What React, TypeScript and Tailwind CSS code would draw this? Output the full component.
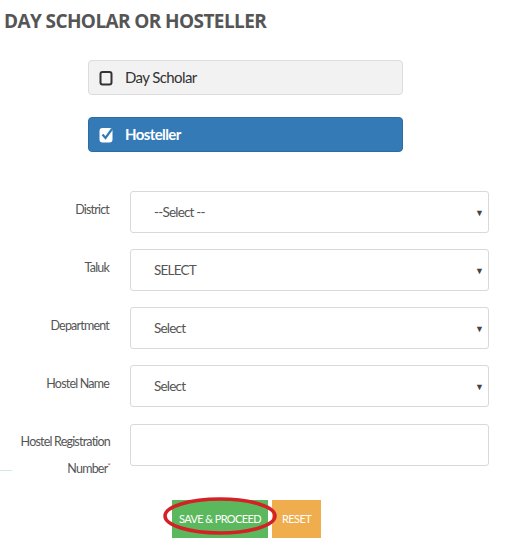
import { useState } from "react";

const narrow = "font-['Lato','Liberation_Sans',sans-serif] tracking-[-0.6px]";
const labelCls = "font-['Lato','Liberation_Sans',sans-serif] tracking-[-0.8px] text-[12.5px] text-[#555]";

function SelectRow({ label, value }: { label: string; value: string }) {
  return (
    <div className="flex items-center h-[42px]">
      <div className={`${labelCls} w-[110px] text-right pr-[1px] -mt-[4px]`}>{label}</div>
      <div className="ml-[20px] w-[359px] h-[42px] border border-[#d9d9d9] rounded-[3px] bg-white flex items-center justify-between pl-[23px] pr-[4px]">
        <span className={`${narrow} text-[13.5px] text-[#555] tracking-[-0.8px]`}>{value}</span>
        <span className="text-[9px] text-[#444] leading-none">▼</span>
      </div>
    </div>
  );
}

export default function App() {
  const [choice, setChoice] = useState("hosteller");

  return (
    <div className="relative w-[513px] h-[541px] bg-white overflow-hidden">
      <h1 className="pl-[4px] pt-[9px] text-[19px] font-bold text-[#555] tracking-[-0.6px] font-['Open_Sans',sans-serif] leading-[24px]">
        DAY SCHOLAR OR HOSTELLER
      </h1>

      <div className="ml-[88px] mt-[27px] flex flex-col gap-[22px] w-[315px]">
        <button
          onClick={() => setChoice("day")}
          className={`h-[35px] rounded-[4px] border flex items-center pl-[10px] ${
            choice === "day" ? "bg-[#337ab7] border-[#2e6da4] text-white" : "bg-[#f2f2f2] border-[#dcdcdc] text-[#333]"
          }`}
        >
          <Box checked={choice === "day"} />
          <span className={`${narrow} ml-[12px] text-[15px]`}>Day Scholar</span>
        </button>
        <button
          onClick={() => setChoice("hosteller")}
          className={`h-[35px] rounded-[4px] border flex items-center pl-[10px] ${
            choice === "hosteller" ? "bg-[#337ab7] border-[#2e6da4] text-white" : "bg-[#f2f2f2] border-[#dcdcdc] text-[#333]"
          }`}
        >
          <Box checked={choice === "hosteller"} />
          <span className={`${narrow} ml-[12px] text-[15px] font-bold`}>Hosteller</span>
        </button>
      </div>

      <div className="mt-[39px] flex flex-col gap-[16px]">
        <SelectRow label="District" value="--Select --" />
        <SelectRow label="Taluk" value="SELECT" />
        <SelectRow label="Department" value="Select" />
        <SelectRow label="Hostel Name" value="Select" />
        <div className="flex items-start h-[42px] mt-[1px]">
          <div className={`${labelCls} w-[110px] text-right leading-[27px] mt-[4px]`}>
            Hostel Registration
            <br />
            Number<sup className="text-[#d9534f] text-[8px]">*</sup>
          </div>
          <input className="ml-[20px] w-[359px] h-[42px] border border-[#d9d9d9] rounded-[3px] bg-white outline-none" />
        </div>
      </div>

      <div className="absolute left-0 top-[470px] w-[12px] h-[1px] bg-[#cfe9e3]" />

      <div className="mt-[34px] ml-[172px] flex gap-[4px]">
        <button className={`${narrow} whitespace-nowrap w-[96px] h-[38px] bg-[#5cb85c] text-white text-[11px]`}>SAVE &amp; PROCEED</button>
        <button className={`${narrow} whitespace-nowrap w-[49px] h-[38px] bg-[#f0ad4e] text-white text-[11px]`}>RESET</button>
      </div>

      <svg className="absolute left-[162px] top-[495px]" width="116" height="42" viewBox="0 0 116 42">
        <ellipse cx="58" cy="21" rx="55" ry="17" fill="none" stroke="#d42027" strokeWidth="3.5" />
      </svg>
    </div>
  );
}

function Box({ checked }: { checked: boolean }) {
  return (
    <svg width="14" height="17" viewBox="0 0 14 17">
      <rect x="1.5" y="3" width="11" height="12.5" rx="2" fill={checked ? "white" : "none"} stroke={checked ? "white" : "#333"} strokeWidth="2" />
      {checked && <path d="M3.5 8.5 L6.5 12 L13 3" fill="none" stroke="#337ab7" strokeWidth="2.2" />}
    </svg>
  );
}
